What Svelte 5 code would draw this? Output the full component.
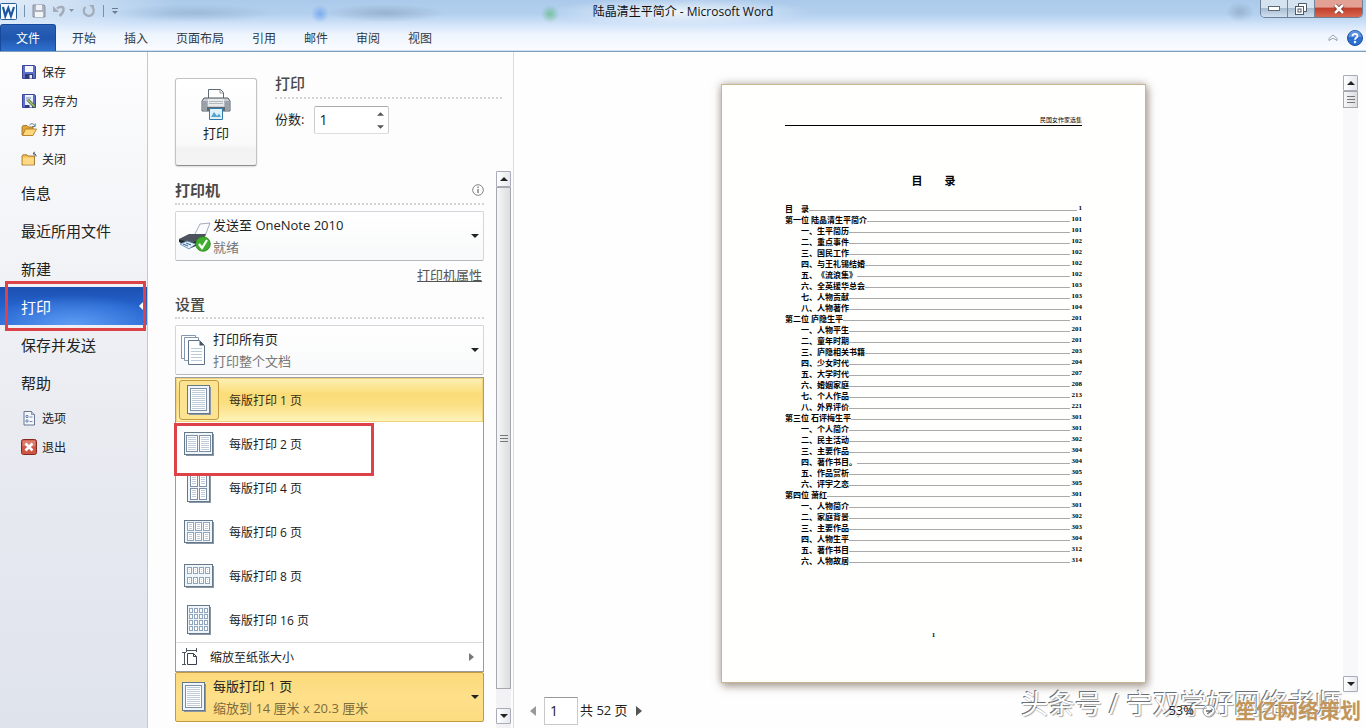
<script>
  const tabs = ['开始', '插入', '页面布局', '引用', '邮件', '审阅', '视图'];
  const fileItems = [
    { icon: 'save', label: '保存' },
    { icon: 'saveas', label: '另存为' },
    { icon: 'open', label: '打开' },
    { icon: 'close', label: '关闭' }
  ];
  const places = ['信息', '最近所用文件', '新建', '打印', '保存并发送', '帮助'];
  const endItems = [
    { icon: 'options', label: '选项' },
    { icon: 'exit', label: '退出' }
  ];
  // xs / ys: left and top edges of the small pages; cw / ch: their size
  const layouts = [
    { n: 1, w: 22, h: 28, xs: [3], ys: [3], cw: 16, ch: 22 },
    { n: 2, w: 28, h: 22, xs: [2, 15], ys: [3], cw: 11, ch: 16 },
    { n: 4, w: 22, h: 28, xs: [3, 12], ys: [2, 15], cw: 7, ch: 11 },
    { n: 6, w: 28, h: 22, xs: [3, 11, 19], ys: [2, 12], cw: 6, ch: 8 },
    { n: 8, w: 28, h: 22, xs: [3, 9, 15, 21], ys: [3, 13], cw: 4, ch: 6 },
    { n: 16, w: 22, h: 28, xs: [2, 7, 12, 17], ys: [3, 9, 15, 21], cw: 3, ch: 4 }
  ];
  const toc = [
    [0, '目　录', 1],
    [0, '第一位 陆晶清生平简介', 101],
    [1, '一、生平简历', 101],
    [1, '二、重点事件', 102],
    [1, '三、国民工作', 102],
    [1, '四、与王礼锡结婚', 102],
    [1, '五、《流浪集》', 102],
    [1, '六、全英援华总会', 103],
    [1, '七、人物贡献', 103],
    [1, '八、人物著作', 104],
    [0, '第二位 庐隐生平', 201],
    [1, '一、人物平生', 201],
    [1, '二、童年时期', 201],
    [1, '三、庐隐相关书籍', 203],
    [1, '四、少女时代', 204],
    [1, '五、大学时代', 207],
    [1, '六、婚姻家庭', 208],
    [1, '七、个人作品', 213],
    [1, '八、外界评价', 221],
    [0, '第三位 石评梅生平', 301],
    [1, '一、个人简介', 301],
    [1, '二、民主活动', 302],
    [1, '三、主要作品', 304],
    [1, '四、著作书目。', 304],
    [1, '五、作品赏析', 305],
    [1, '六、评宇之恋', 305],
    [0, '第四位 萧红', 301],
    [1, '一、人物简介', 301],
    [1, '二、家庭背景', 302],
    [1, '三、主要作品', 303],
    [1, '四、人物生平', 304],
    [1, '五、著作书目', 312],
    [1, '六、人物故居', 314]
  ];
  let copies = $state('1');
  let page = $state('1');

  function cells(l) {
    return l.ys.flatMap((y) => l.xs.map((x) => ({ x: x + 0.5, y: y + 0.5, w: l.cw, h: l.ch })));
  }
  function lines(c) {
    const out = [];
    for (let y = c.y + 2; y < c.y + c.h - 1; y += 2) out.push(y);
    return out;
  }
</script>

{#snippet sheet(l)}
  <svg width={l.w + 2} height={l.h + 2} viewBox="0 0 {l.w + 2} {l.h + 2}" aria-hidden="true">
    <rect x="2" y="2" width={l.w} height={l.h} fill="#8d96a3" />
    <rect x=".5" y=".5" width={l.w} height={l.h} fill="#f0f5fa" stroke="#64788c" />
    {#each cells(l) as c}
      <rect x={c.x} y={c.y} width={c.w} height={c.h} fill="#fff" stroke={l.n > 4 ? '#8fa5bb' : '#7c8fa3'} />
      {#each lines(c) as y}
        <path d="M{c.x + 1.5} {y}H{c.x + c.w - 1.5}" stroke="#c0ccda" />
      {/each}
    {/each}
  </svg>
{/snippet}

{#snippet icon(name)}
  <svg width="16" height="16" viewBox="0 0 16 16" aria-hidden="true">
    {#if name === 'save' || name === 'saveas'}
      <path d="M1.5 1.5h12l1 1v12h-13z" fill="#5d6fc9" stroke="#3b459b" />
      <path d="M4 2h8v6H4z" fill="#f4f7ff" />
      <path d="M4 10h8v4.500H4z" fill="#2f3976" />
      <path d="M8.500 11h2.500v3.500H8.500z" fill="#e8ecfa" />
      {#if name === 'saveas'}
        <path d="M4 3h8v9H4z" fill="#e8eef8" /><path d="M5 5h5M5 7h4" stroke="#7d8fb9" />
        <path d="M7 7l7 7" stroke="#4b6a35" stroke-width="3" /><path d="M7 7l6.500 6.500" stroke="#a8c66c" stroke-width="1.400" />
      {/if}
    {:else if name === 'open'}
      <path d="M1 13V5l1-1.500h4L7.500 5H12v8z" fill="#e0a63c" stroke="#94691d" stroke-width=".8" />
      <path d="M1.500 13.500L4.500 7H15.500L12 13.500z" fill="#ffd67a" stroke="#a87420" stroke-width=".8" />
      <path d="M8.500 3c2-2 4-1.500 5 .5M14.200 1.500v3h-3" fill="none" stroke="#5f7488" />
    {:else if name === 'close'}
      <path d="M1 14V5l1-1.200h4L7 5h6.500v9z" fill="#f5bd53" stroke="#936721" stroke-width=".8" />
      <path d="M1.800 6.500h11v7h-11z" fill="#ffd983" />
      <path d="M15 5.500c0-2-.8-3-2.500-3M13.800 1l-1.800 1.500 1.800 1.700" fill="none" stroke="#3c4652" />
    {:else if name === 'options'}
      <path d="M3 1.500h7.500l3 3v10.500H3z" fill="#f3f7fc" stroke="#66778e" />
      <path d="M10.500 1.500v3h3" fill="#b9c8d9" stroke="#66778e" stroke-width=".7" />
      <path d="M5 5.500h2v2H5zM5 10h2v2H5z" fill="none" stroke="#5675a6" stroke-width=".8" />
      <path d="M8.500 7h3M8.500 11.500h3" stroke="#7787a0" />
    {:else if name === 'exit'}
      <rect x=".5" y=".5" width="15" height="15" rx="2" fill="#cf5645" stroke="#84291e" />
      <rect x="1.500" y="1.500" width="13" height="6" rx="1" fill="#e08b7c" opacity=".7" />
      <path d="M4.500 4.500l7 7M11.500 4.500l-7 7" stroke="#fff" stroke-width="2.600" />
    {/if}
  </svg>
{/snippet}

{#snippet caret(kind)}
  <svg width="8" height="4" viewBox="0 0 8 4" aria-hidden="true"><path d={kind === 'up' ? 'M4 0l4 4H0z' : 'M0 0h8L4 4z'} fill="currentColor" /></svg>
{/snippet}

<div class="app">
  <header>
    <div class="titlebar">
      <div class="quick">
        <svg class="word" width="17" height="17" viewBox="0 0 17 17" aria-hidden="true">
          <rect x=".5" y=".5" width="16" height="16" rx="1" fill="#f6fbff" stroke="#2a5c98" />
          <path d="M3 4l2.300 9 3-8 2.700 8L14 4" fill="none" stroke="#1e56a0" stroke-width="2.200" />
        </svg>
        <i class="sep"></i>
        <button aria-label="保存"><svg width="14" height="14" viewBox="0 0 14 14"><path d="M1 1h11l1 1v11H1z" fill="#aeb4bf" stroke="#8a919e" /><path d="M4 1h6v5H4z" fill="#eef1f5" /><path d="M3 8h8v5H3z" fill="#f2f4f7" /></svg></button>
        <button class="undo" aria-label="撤消"><svg width="22" height="14" viewBox="0 0 22 14"><path d="M4 4.500c4-3 7-1.500 6.500 1.500-.3 2.500-1.500 4-4 6" fill="none" stroke="#a4abb9" stroke-width="2.400" /><path d="M0 2v6h6z" fill="#a4abb9" /><path d="M16 5h5l-2.500 3z" fill="#8792a3" /></svg></button>
        <button aria-label="重复"><svg width="14" height="14" viewBox="0 0 14 14"><path d="M3.500 3a5 5 0 1 0 7 .5" fill="none" stroke="#a4abb9" stroke-width="2.200" /><path d="M7 1h5v5z" fill="#a4abb9" /></svg></button>
        <i class="sep"></i>
        <button aria-label="自定义快速访问工具栏"><svg width="8" height="8" viewBox="0 0 8 8"><path d="M1 1.500h6" stroke="#6c7c90" /><path d="M1 4h6L4 7z" fill="#6c7c90" /></svg></button>
      </div>
      <h1>陆晶清生平简介 - Microsoft Word</h1>
      <div class="window">
        <button aria-label="最小化"><svg width="12" height="6" viewBox="0 0 12 6"><rect x=".5" y=".5" width="11" height="4" fill="#fff" stroke="#5c6a7b" /></svg></button>
        <button aria-label="向下还原"><svg width="12" height="12" viewBox="0 0 12 12"><path d="M3.500 3V.5h8v8H9" fill="#fff" stroke="#4b596b" /><rect x=".5" y="3.500" width="8" height="8" fill="#fff" stroke="#4b596b" /><rect x="3" y="6" width="3" height="3" fill="none" stroke="#4b596b" /></svg></button>
        <button class="exit" aria-label="关闭"><svg width="12" height="10" viewBox="0 0 12 10"><path d="M2 1l8 8M10 1L2 9" stroke="#7a2b22" stroke-width="4" /><path d="M2 1l8 8M10 1L2 9" stroke="#fff" stroke-width="2.500" /></svg></button>
      </div>
    </div>
    <nav class="tabs">
      <button class="file">文件</button>
      {#each tabs as t}<button>{t}</button>{/each}
      <span class="grow"></span>
      <button class="mini" aria-label="功能区最小化"><svg width="10" height="8" viewBox="0 0 10 8"><path d="M1 4.500L5 1l4 3.500v2L5 4 1 6.500z" fill="#fff" stroke="#8795a6" stroke-width=".9" /></svg></button>
      <button class="mini" aria-label="帮助"><svg width="16" height="16" viewBox="0 0 16 16"><circle cx="8" cy="8" r="7.500" fill="#2f6fd0" stroke="#1d4f9f" /><path d="M1.500 7a6.500 6.500 0 0 1 13 0z" fill="#6d9fe6" opacity=".7" /><path d="M5.500 6.200c0-3.200 5-3 5-.2 0 1.900-2.500 1.700-2.500 3.700" fill="none" stroke="#fff" stroke-width="1.800" /><circle cx="8" cy="12" r="1.200" fill="#fff" /></svg></button>
    </nav>
  </header>

  <div class="body">
    <aside>
      {#each fileItems as f}<button class="small">{@render icon(f.icon)}{f.label}</button>{/each}
      {#each places as p}
        <button class="place" class:active={p === '打印'}>{p}</button>
      {/each}
      <div class="ends">
        {#each endItems as f}<button class="small">{@render icon(f.icon)}{f.label}</button>{/each}
      </div>
      <div class="mark place-mark"></div>
    </aside>

    <section class="print">
      <div class="top">
        <button class="go">
          <svg width="30" height="31" viewBox="0 0 30 31" aria-hidden="true">
            <path d="M7.500 9V.5h12l3 3V9" fill="#fff" stroke="#5f6a75" />
            <path d="M19 1v3h3" fill="none" stroke="#8b949e" />
            <path d="M3 9h24l2 3v10H1V12z" fill="#c9cdd1" stroke="#555e67" />
            <path d="M1.500 12h5v9.500h-5zM23.500 12h5v9.500h-5z" fill="#9aa1a8" />
            <path d="M7 10h16v7H7z" fill="#e8eaec" />
            <path d="M8 12.500h14M8 14.500h14" stroke="#b2b8be" />
            <path d="M6 18h18v4H6z" fill="#5e6972" />
            <path d="M8.500 19.500h13v11h-13z" fill="#dff1fb" stroke="#347ca8" />
            <path d="M10 28l3-5 3 4 2-2.500 2 3.500z" fill="#57a5cb" />
          </svg>
          <span>打印</span>
        </button>
        <div class="job">
          <h2>打印</h2>
          <div class="copies">
            <label for="copies">份数:</label>
            <div class="spin">
              <input id="copies" bind:value={copies} inputmode="numeric" />
              <span>
                <button aria-label="增加份数" onclick={() => (copies = String(+copies + 1))}>{@render caret('up')}</button>
                <button aria-label="减少份数" onclick={() => (copies = String(Math.max(1, +copies - 1)))}>{@render caret('down')}</button>
              </span>
            </div>
          </div>
        </div>
      </div>

      <div class="scroller">
        <div class="settings">
          <h2 class="wide">打印机
            <svg width="12" height="12" viewBox="0 0 12 12" aria-hidden="true"><circle cx="6" cy="6" r="5.300" fill="#fff" stroke="#777" stroke-width=".9" /><path d="M6 5v4M6 2.600v1.300" stroke="#666" stroke-width="1.200" /></svg>
          </h2>
          <button class="combo" aria-haspopup="listbox">
            <svg width="34" height="32" viewBox="0 0 34 32" aria-hidden="true">
              <path d="M15 16L21 4l10-1-5 13z" fill="#fcfcff" stroke="#8e95a6" stroke-width=".8" />
              <path d="M0 19l10-5h17l-3 6-13 5z" fill="#4c535c" />
              <path d="M0 19l11 4 13-4v4l-12 5L0 22z" fill="#24292f" />
              <path d="M1 24l7-3 9 3-7 5z" fill="#e1edf8" stroke="#5582a7" stroke-width=".8" />
              <path d="M4 24l5 2M7 23l5 2" stroke="#2f648f" />
              <circle cx="24" cy="24" r="7.300" fill="#3fae2d" stroke="#278219" stroke-width=".8" />
              <path d="M20 24l3 4 5-8" fill="none" stroke="#fff" stroke-width="2.200" />
            </svg>
            <span class="two"><b>发送至 OneNote 2010</b><em>就绪</em></span>
            {@render caret('down')}
          </button>
          <a class="props" href="#properties">打印机属性</a>
          <h2 class="wide">设置</h2>
          <button class="combo" aria-haspopup="listbox">
            <svg width="34" height="32" viewBox="0 0 34 32" aria-hidden="true">
              <g fill="#fff" stroke="#8698ac"><path d="M2.500 1.500h14v23h-14z" /><path d="M5.500 3.500h14v23h-14z" /><path d="M9.500 6.500h11l5 5v19h-16z" stroke="#5e738a" /></g>
              <path d="M20.500 6.500v5h5z" fill="#44586e" />
              <path d="M12 14.500h11M12 17.500h11M12 20.500h11M12 23.500h11M12 26.500h11" stroke="#b9cadb" />
            </svg>
            <span class="two"><b>打印所有页</b><em>打印整个文档</em></span>
            {@render caret('down')}
          </button>
          <div class="menu" role="listbox" aria-label="每版打印页数">
            {#each layouts as l}
              <button role="option" aria-selected={l.n === 1} class:chosen={l.n === 1}>
                <span class="thumb">{@render sheet(l)}</span>每版打印 {l.n} 页
              </button>
            {/each}
            <button class="scale" role="option" aria-selected="false">
              <svg width="16" height="18" viewBox="0 0 16 18" aria-hidden="true"><path d="M4.500 0v4M14.500 0v4M4 2.500h10M0 4.500h4M0 16.500h4M2.500 4.500v12" stroke="#4b5563" fill="none" /><path d="M5.500 5.500h6l3 3v8h-9z" fill="#fff" stroke="#39434f" /><path d="M11.500 5.500v3h3" fill="none" stroke="#39434f" /></svg>
              <span>缩放至纸张大小</span>
              <svg width="5" height="8" viewBox="0 0 5 8" aria-hidden="true"><path d="M0 0l5 4-5 4z" fill="#777" /></svg>
            </button>
            <div class="mark menu-mark"></div>
          </div>
          <button class="combo pressed" aria-haspopup="listbox" aria-expanded="true">
            <span class="pic">{@render sheet(layouts[0])}</span>
            <span class="two"><b>每版打印 1 页</b><em>缩放到 14 厘米 x 20.3 厘米</em></span>
            {@render caret('down')}
          </button>
        </div>
        <div class="bar">
          <button aria-label="向上滚动">{@render caret('up')}</button>
          <div class="thumbbar"><i></i></div>
          <button aria-label="向下滚动">{@render caret('down')}</button>
        </div>
      </div>
    </section>

    <main>
      <div class="view">
        <div class="desk">
          <article>
            <div class="running">民国女作家选集</div>
            <h3>目　　录</h3>
            <ol>
              {#each toc as [level, text, no]}
                <li class:sub={level === 1}><span>{text}</span><i></i><span class="no">{no}</span></li>
              {/each}
            </ol>
            <footer>1</footer>
          </article>
        </div>
        <div class="bar right">
          <button aria-label="向上滚动">{@render caret('up')}</button>
          <div class="thumbbar short"><i></i></div>
          <span class="grow"></span>
          <button aria-label="向下滚动">{@render caret('down')}</button>
        </div>
      </div>
      <div class="status">
        <button aria-label="上一页"><svg width="6" height="10" viewBox="0 0 6 10"><path d="M6 0v10L0 5z" fill="#999" /></svg></button>
        <input aria-label="当前页" bind:value={page} />
        <span>共 52 页</span>
        <button aria-label="下一页"><svg width="6" height="10" viewBox="0 0 6 10"><path d="M0 0v10l6-5z" fill="#555" /></svg></button>
        <span class="grow"></span>
        <span class="zoom">53%</span>
        <button aria-label="缩小"><svg width="14" height="14" viewBox="0 0 14 14"><circle cx="7" cy="7" r="6" fill="none" stroke="#999" /><path d="M4 7h6" stroke="#666" stroke-width="1.500" /></svg></button>
      </div>
      <div class="author">头条号 / 宁双学好网络老师</div>
      <div class="brand">笙亿网络策划</div>
    </main>
  </div>
</div>

<style>
  :global(body) { margin: 0; }
  .app, .app :is(button, input) { font-family: 'Open Sans', 'Noto Sans CJK SC', sans-serif; font-size: 12px; color: #222; }
  .app { min-height: 100vh; display: flex; flex-direction: column; background: #fdfdfd; overflow: hidden; }
  .app * { box-sizing: border-box; }
  button { border: 0; padding: 0; margin: 0; background: none; display: flex; align-items: center; }
  svg { flex: none; display: block; }
  .grow { flex: 1; }

  header {
    border-bottom: 1px solid #7e9fbd; box-shadow: inset 0 -1px #cfe0f0;
    background:
      radial-gradient(ellipse 80px 9px at 195px 13px, #8ba9c788, transparent),
      radial-gradient(circle 9px at 320px 14px, #5f9bf0aa, transparent),
      radial-gradient(ellipse 60px 9px at 385px 13px, #8199b488, transparent),
      radial-gradient(circle 9px at 550px 14px, #5cb87caa, transparent),
      radial-gradient(ellipse 130px 14px at 680px 12px, #ffffffcc, transparent),
      radial-gradient(ellipse 14px 10px at 1240px 12px, #7892ae77, transparent),
      radial-gradient(ellipse 180px 40px at 0 0, #ffffffaa, transparent),
      linear-gradient(#abc9ea 0, #b3d0ef 14px, #d6e6fa 26px, #edf4fd 34px, #fafcff 50px);
  }
  .titlebar { height: 24px; display: grid; grid-template-columns: 1fr auto 1fr; align-items: start; }
  .quick { display: flex; align-items: center; gap: 7px; height: 22px; }
  .sep { width: 1px; height: 12px; background: #7990aa; }
  h1 { margin: 0; font-size: 12px; font-weight: 400; line-height: 24px; color: #111; }
  .window { justify-self: end; margin-right: 3px; display: flex; height: 18px; border: 1px solid #6c8097; border-top: 0; border-radius: 0 0 5px 5px; overflow: hidden; }
  .window button { width: 27px; justify-content: center; border-right: 1px solid #71859b; background: linear-gradient(#d5e3f1 0 45%, #a9bdd1 50%, #cfe0ef); }
  .window .exit { width: 47px; border: 0; background: linear-gradient(#e3a196 0 40%, #c0402c 50%, #d9674f); }
  .tabs { height: 27px; display: flex; align-items: center; padding-right: 3px; }
  .tabs button { height: 27px; padding: 0 14px; color: #303844; }
  .tabs .file { width: 56px; padding: 0; margin-right: 2px; justify-content: center; color: #fff; border: 1px solid #174a9c; border-bottom: 0; border-radius: 3px 3px 0 0; background: linear-gradient(#2c63b8, #1f56ae 50%, #2f71cf); }
  .tabs .mini { padding: 0; margin-left: 9px; }

  .body { flex: 1; display: flex; align-items: stretch; }
  aside { position: relative; width: 148px; flex: none; padding-top: 5px; border-right: 1px solid #c3c8d0; background: linear-gradient(#fdfdfe, #f3f4f7 28%, #e9ebf1 55%, #dfe3ec); }
  aside button { width: 100%; padding-left: 21px; color: #1b1b1b; }
  aside .small { height: 29px; gap: 5px; }
  aside .place { height: 38px; font-size: 15px; }
  .ends { padding-top: 2px; }
  aside .active { position: relative; color: #fff; background: radial-gradient(ellipse 90px 30px at 50% 100%, #5e9cf3, transparent), linear-gradient(#1c4fb0, #2463cd 50%, #2a6bd6); }
  aside .active::after { content: ''; position: absolute; right: 4px; border: 4px solid transparent; border-right-color: #fff; border-left: 0; }
  .mark { position: absolute; border: 3px solid #dc4248; pointer-events: none; }
  .place-mark { left: 5px; top: 229px; width: 141px; height: 50px; }

  .print { width: 366px; flex: none; display: flex; flex-direction: column; padding-left: 27px; border-right: 1px solid #dcdde0; }
  .top { display: flex; gap: 18px; padding: 26px 11px 5px 0; }
  .go { width: 82px; height: 88px; flex-direction: column; gap: 3px; padding-top: 10px; border: 1px solid #c2c2c4; border-bottom-color: #8e8e90; border-radius: 3px; background: linear-gradient(#fff, #fafafa 75%, #f2f2f2 82%, #f4f4f4); box-shadow: 0 1px 2px #0002; }
  .go span, .app .copies label { font-size: 13px; }
  .job { flex: 1; }
  h2 { margin: 0; font-size: 15px; font-weight: 500; line-height: 20px; color: #484848; padding-bottom: 4px; border-bottom: 2px dotted #d4d4d4; }
  .job h2 { margin-top: -5px; }
  .copies { display: flex; align-items: center; gap: 10px; padding-top: 7px; }
  .copies label { line-height: 16px; padding-bottom: 2px; }
  .spin { display: flex; width: 75px; height: 28px; border: 1px solid #b4b4b8; border-color: #aaa #ccc #ddd; border-radius: 2px; background: #fff; }
  .spin input { width: 100%; min-width: 0; border: 0; padding: 0 4px 2px; background: none; font-size: 14px; outline: 0; }
  .spin span { display: flex; flex-direction: column; justify-content: space-around; padding-right: 4px; }
  .spin svg { width: 7px; color: #555; }

  .scroller { flex: 1; display: flex; gap: 12px; padding-right: 2px; }
  .settings { width: 309px; flex: none; padding-top: 9px; }
  .wide { display: flex; align-items: center; justify-content: space-between; margin-bottom: 6px; font-weight: 700; padding-bottom: 3px; }
  .props + .wide { font-weight: 500; }
  .combo { width: 100%; height: 50px; padding: 0 4px 0 3px; border: 1px solid #d3d6da; border-bottom-color: #b5b8bd; border-radius: 2px; background: linear-gradient(#fff, #f8f9fa); text-align: left; }
  .two { flex: 1; display: flex; flex-direction: column; color: #777; }
  .two b, .two em { font: inherit; font-size: 13px; line-height: 22px; }
  .two b { color: #222; }
  .props { display: block; width: max-content; margin: 4px 2px 9px auto; font-size: 13px; line-height: 20px; color: #555; }
  .menu { position: relative; margin-top: 2px; border: 1px solid #999b9e; background: #fff; }
  .menu button { width: 100%; height: 44px; padding-left: 2px; gap: 10px; border: 1px solid transparent; }
  .thumb { width: 40px; height: 40px; display: flex; align-items: center; justify-content: center; border: 1px solid transparent; border-radius: 3px; }
  .menu .chosen { border-color: #efd27a; background: linear-gradient(#fdf0b4, #fbdc78 35%, #fbdf82 60%, #fef3b9); color: #3a2d10; }
  .chosen .thumb { border-color: #c39a3c; background: #fbe392; }
  .menu .scale { height: 29px; border-top: 1px solid #d9dadc; padding: 0 8px 0 5px; gap: 12px; }
  .scale span { flex: 1; text-align: left; }
  .menu-mark { left: -2px; top: 45px; width: 200px; height: 53px; }
  .pressed { border-color: #c09a45; background: linear-gradient(#fcd97b, #fee08a 50%, #fddc80); }
  .pressed .two { color: #7d6c3d; }
  .pic { width: 34px; padding-left: 3px; }

  .bar { width: 15px; flex: none; display: flex; flex-direction: column; color: #3b4252; background: #f2f2f4; padding-bottom: 4px; }
  .bar button { height: 16px; justify-content: center; border: 1px solid #a9acb8; border-radius: 1px; background: linear-gradient(90deg, #fff, #e6e8f0); }
  .thumbbar { flex: 1; margin-bottom: 19px; display: flex; align-items: center; justify-content: center; border: 1px solid #a6a8ae; background: linear-gradient(90deg, #f6f6f7, #dcdde0); }
  .thumbbar i { width: 8px; height: 7px; background: repeating-linear-gradient(#777 0 1px, transparent 1px 3px); }
  .thumbbar.short { flex: none; height: 17px; margin: 0; }

  main { position: relative; flex: 1; min-width: 0; display: flex; flex-direction: column; background: #fefefe; }
  .view { flex: 1; display: flex; padding-right: 8px; }
  .right { margin-top: 23px; padding-bottom: 2px; background: #f8f8fa; }
  .desk { flex: 1; display: flex; justify-content: center; align-items: flex-start; padding: 32px 0 10px 10px; }
  article { width: 425px; max-width: 100%; padding: 31px 63px 42px; border: 1px solid #c6b694; background: #fffffe; box-shadow: 0 0 8px #8b7a6e99, 2px 4px 8px #8b7a6e88; color: #000; }
  .running { border-bottom: 1px solid #000; text-align: right; font-size: 6px; line-height: 9px; }
  h3 { margin: 47px 0 14px; text-align: center; font-size: 11px; line-height: 16px; }
  ol { list-style: none; margin: 0; padding: 0; }
  li { display: flex; height: 11px; font-size: 8px; line-height: 11px; font-weight: 700; white-space: pre; }
  li.sub { padding-left: 16px; }
  li i { flex: 1; height: 8px; border-bottom: 1px solid #aaa; }
  .no, footer { font-family: 'Liberation Serif', serif; font-weight: 700; font-size: 7px; padding-left: 2px; }
  footer { padding: 64px 0 0; text-align: center; line-height: 10px; }

  .status { position: relative; z-index: 1; height: 34px; display: flex; align-items: center; padding: 0 150px 0 16px; gap: 8px; }
  .status span { font-size: 13px; line-height: 18px; padding-bottom: 2px; }
  .status input { width: 34px; height: 28px; padding: 0 5px 2px; border: 1px solid #c9c9cc; border-top-color: #999; font-size: 14px; background: #fff; }
  .status input + span { margin-left: -6px; }
  .author { position: absolute; right: 24px; bottom: 4px; font-size: 27px; line-height: 40px; color: #fff; text-shadow: -1px -1px #6a7077, 1px 1px 1px #aaa; white-space: nowrap; }
  .brand { position: absolute; z-index: 2; right: 5px; bottom: 4px; font-size: 21px; font-weight: 700; line-height: 28px; color: #c0965c; text-shadow: 0 0 2px #fff; white-space: nowrap; }
</style>
